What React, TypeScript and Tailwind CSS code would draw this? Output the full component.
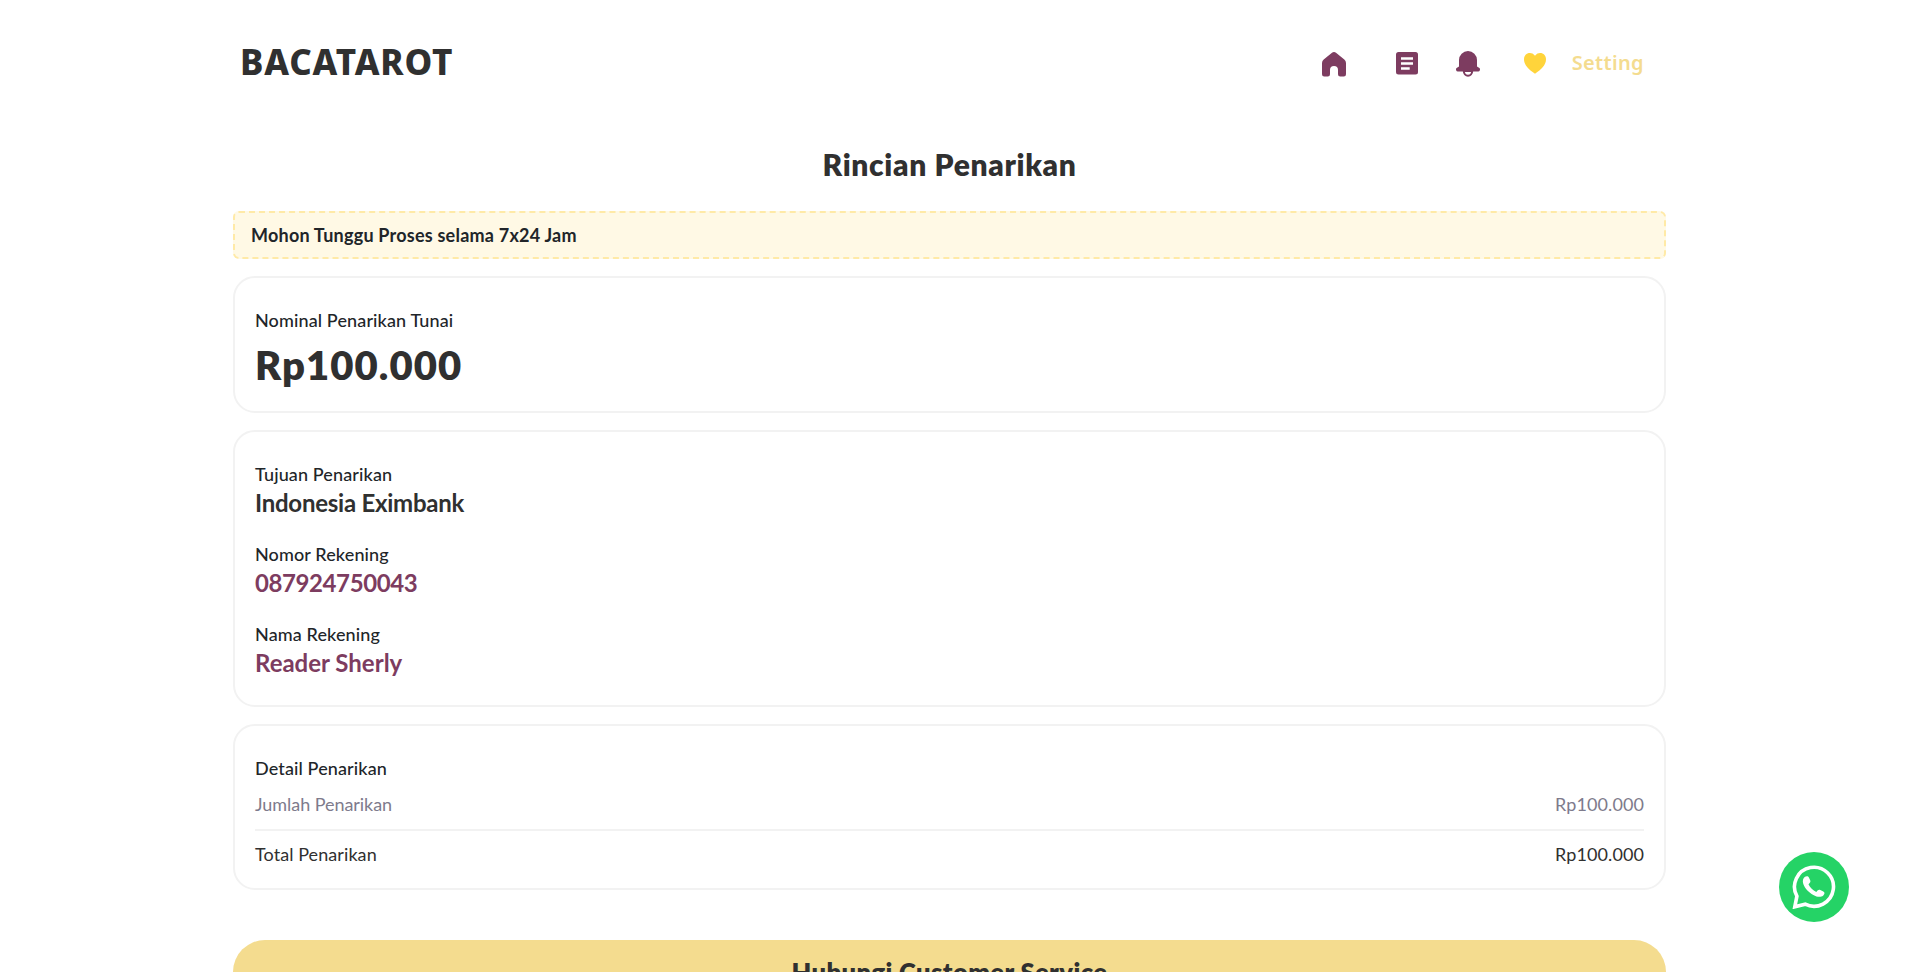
import type { ReactNode } from "react";

function HomeIcon() {
  return (
    <svg width="24" height="25" viewBox="0 0 24 25" fill="#7d3c60">
      <path d="M10 .8a3.200 3.200 0 0 1 4 0l8.300 6.800A4.600 4.600 0 0 1 24 11v11.300a2.200 2.200 0 0 1-2.200 2.200h-3.600a2.200 2.200 0 0 1-2.200-2.200V18a4 4 0 0 0-8 0v4.300a2.200 2.200 0 0 1-2.200 2.200H2.200A2.200 2.200 0 0 1 0 22.300V11a4.600 4.600 0 0 1 1.700-3.400z" />
    </svg>
  );
}

function ArticleIcon() {
  return (
    <svg width="22" height="23" viewBox="0 0 22 23">
      <rect width="22" height="22.500" rx="2.500" fill="#7d3c60" />
      <path d="M5 6.500h12M5 11.500h12M5 16.500h8.700" stroke="#fff" strokeWidth="2.300" />
    </svg>
  );
}

function BellIcon() {
  return (
    <svg width="24" height="26" viewBox="0 0 24 26">
      <path d="M7.800 20a4.200 4.700 0 0 0 8.400 0z" fill="#fff" stroke="#7d3c60" strokeWidth="2" />
      <path d="M3 9a9 9 0 0 1 18 0v6.500l2.400 1.600A2 2 0 0 1 22.200 20.500H1.800A2 2 0 0 1 .6 17.100L3 15.500z" fill="#7d3c60" />
    </svg>
  );
}

function HeartIcon() {
  return (
    <svg width="22" height="21" viewBox="0 0 22 21" fill="#ffd43b">
      <path d="M11 2.700C9.300.6 7.700 0 5.900 0 2.500 0 0 2.700 0 6.200c0 5.900 4.600 9.900 11 14.600 6.400-4.700 11-8.700 11-14.600C22 2.700 19.500 0 16.100 0 14.300 0 12.700.6 11 2.700z" />
    </svg>
  );
}

function WhatsAppIcon() {
  return (
    <svg width="44" height="44" viewBox="0 0 44 44">
      <path d="M4.900 31.200A19.500 19.500 0 1 1 13.200 39.200L2.800 41.800z" fill="none" stroke="#fff" strokeWidth="3.600" />
      <path d="M13 11.800c1.800-1 3.200-.6 4 .9l1.200 2.600c.7 1.600-.2 2.500-1.700 4 1.700 3.600 4.300 6 7.800 7.700 1.600-2 2.500-2.800 4-2l3 1.500c1.700 1 1.500 2.500 0 3.900-2.600 2.200-6 1.800-10-.5-4.500-2.700-8.500-6.600-10-11-1-3-.3-5.600 1.700-7.100z" fill="#fff" />
    </svg>
  );
}

function Card({ className, children }: { className: string; children: ReactNode }) {
  return <section className={`rounded-[22px] border-2 border-[#f2f2f2] px-5 ${className}`}>{children}</section>;
}

function Label({ children, className = "tracking-[0.12px]" }: { children: ReactNode; className?: string }) {
  return <p className={`text-lg leading-[27px] font-medium text-[#212529] ${className}`}>{children}</p>;
}

export default function App() {
  return (
    <div className="h-[972px] w-full overflow-hidden bg-white font-[Lato,sans-serif] text-[#303030]">
      <div className="w-[1899px] px-[233px]">
        <header className="flex h-[124px] items-center justify-between pr-[22px] pl-[7px]">
          <a href="#" className="font-['Noto_Sans',sans-serif] text-[35px] leading-[50px] font-extrabold tracking-[0.85px]">BACATAROT</a>
          <nav className="flex items-center pt-[2px]">
            <a href="#" className="mr-[50px] pt-[2px]"><HomeIcon /></a>
            <a href="#" className="mr-[38px]"><ArticleIcon /></a>
            <a href="#" className="mr-[44px] pt-[2px]"><BellIcon /></a>
            <a href="#" className="mr-[26px] pt-px"><HeartIcon /></a>
            <a href="#" className="font-['Noto_Sans',sans-serif] text-xl font-semibold tracking-[0.35px] text-[#f4dc8f]">Setting</a>
          </nav>
        </header>

        <h1 className="mt-[20px] text-center text-[30px] leading-10 font-extrabold tracking-[0.65px]">Rincian Penarikan</h1>

        <div className="mt-[27px] flex h-12 items-center rounded-md border-2 border-dashed border-[#ffeaa7] bg-[#fff9e5] pl-4 text-lg font-bold tracking-[0.22px] text-[#212529]">
          Mohon Tunggu Proses selama 7x24 Jam
        </div>

        <Card className="mt-[17px] h-[137px] pt-[29px]">
          <Label>Nominal Penarikan Tunai</Label>
          <p className="mt-[7px] text-[40px] leading-[48px] font-extrabold tracking-[1.05px]">Rp100.000</p>
        </Card>

        <Card className="mt-[17px] flex h-[277px] flex-col gap-[23px] pt-[29px]">
          <div>
            <Label>Tujuan Penarikan</Label>
            <p className="text-2xl leading-[30px] font-bold tracking-[-0.25px]">Indonesia Eximbank</p>
          </div>
          <div>
            <Label>Nomor Rekening</Label>
            <p className="text-2xl leading-[30px] font-bold tracking-[-0.4px] text-[#7d3c60]">087924750043</p>
          </div>
          <div>
            <Label>Nama Rekening</Label>
            <p className="text-2xl leading-[30px] font-bold text-[#7d3c60]">Reader Sherly</p>
          </div>
        </Card>

        <Card className="mt-[17px] h-[166px] pt-[29px]">
          <Label>Detail Penarikan</Label>
          <div className="mt-[9px] flex justify-between border-b-2 border-[#f2f2f2] pb-[11px] text-lg leading-[27px] text-[#7e7b8c]">
            <span className="tracking-[-0.05px]">Jumlah Penarikan</span>
            <span className="tracking-[0.1px]">Rp100.000</span>
          </div>
          <div className="mt-[10px] flex justify-between text-lg leading-[27px]">
            <span className="tracking-[0.08px]">Total Penarikan</span>
            <span className="tracking-[0.1px]">Rp100.000</span>
          </div>
        </Card>

        <button className="mt-[50px] h-16 w-full rounded-[32px] bg-[#f4dc8f] text-[25.5px] leading-[32px] font-extrabold tracking-[0.42px]">
          Hubungi Customer Service
        </button>
      </div>

      <a href="#" aria-label="WhatsApp" className="fixed right-[71px] bottom-[50px] flex size-[70px] items-center justify-center rounded-full bg-[#25d366]">
        <WhatsAppIcon />
      </a>
    </div>
  );
}
